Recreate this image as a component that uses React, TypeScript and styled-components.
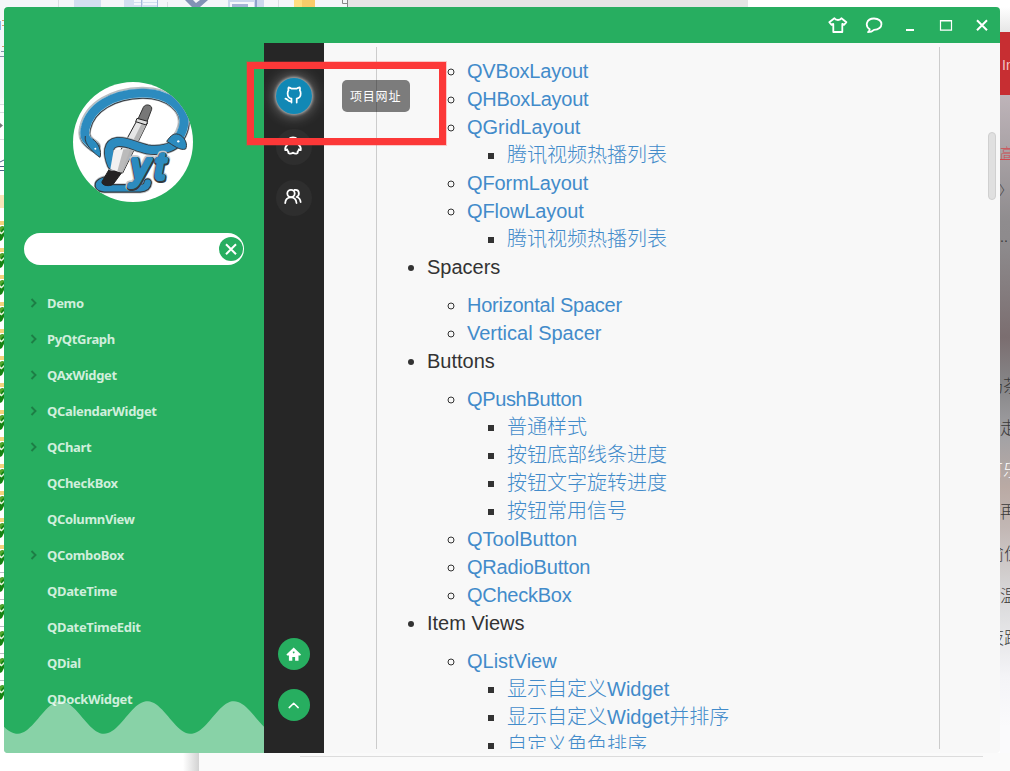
import React from 'react';
import styled, { createGlobalStyle, css } from 'styled-components';

const GREEN = '#27ae60';

const GlobalStyle = createGlobalStyle`
  * { box-sizing: border-box; }
  body { margin: 0; overflow: hidden; }
  button { border: 0; padding: 0; background: none; color: inherit; font: inherit; }
`;

/* ---------- desktop behind the window ---------- */

const Desktop = styled.div`
  position: relative;
  width: 1010px;
  height: 771px;
  overflow: hidden;
  background: #fff;
  font-family: 'Liberation Sans', 'Noto Sans CJK SC', sans-serif;
`;

const Backdrop = styled.div`
  display: grid;
  grid-template: 7px 746px 18px / 4px 996px 10px;
  height: 771px;
`;

const ToolbarStrip = styled.div`
  grid-column: 1 / 4;
  display: flex;
  height: 7px;
  overflow: hidden;
`;

const RibbonPart = styled.div`
  width: 348px;
  height: 7px;
  background: #f4f6f9;
  svg { display: block; }
`;

const GreyPart = styled.div`
  width: 400px;
  background: #e5e5e5;
`;

const FileStrip = styled.div`
  width: 4px;
  overflow: hidden;
  background: #fff;
`;

const FileStripHead = styled.div`
  height: 214px;
  background: linear-gradient(#f4f6f9 90px, #fff 100px);
  svg { display: block; }
`;

const FileRow = styled.div<{ $folder: boolean }>`
  height: 27px;
  border-top: ${p => (p.$folder ? '4px solid #f3d27c' : '1px solid #b9bcc2')};
  padding-top: ${p => (p.$folder ? 0 : 3)}px;
  svg { display: block; }
`;

const PageStrip = styled.div`
  grid-column: 3;
  grid-row: 2;
  width: 10px;
  overflow: hidden;
  background: linear-gradient(
    #fff 0, #e6e6e6 25px, #c72e32 25px, #c72e32 88px,
    #beb4b9 88px, #8f8c8e 215px, #8d8a8c 240px, #7b6e70 330px, #858486 375px, #a3a2a5 430px,
    #baaaa4 480px, #c2b7b4 520px, #d9d9da 590px, #f4f4f7 670px, #fafafc 720px
  );
`;

const PageLine = styled.div<{ $h: number; $x?: number; $color?: string; $size?: number }>`
  height: ${p => p.$h}px;
  line-height: ${p => p.$h}px;
  margin-left: ${p => p.$x ?? 0}px;
  color: ${p => p.$color ?? '#3a3a3a'};
  font-size: ${p => p.$size ?? 17}px;
  font-weight: 300;
  white-space: nowrap;
`;

const PageFoot = styled.div`
  grid-column: 1 / 4;
  display: grid;
  grid-template-columns: 183px 16px 101px 683px 1fr;
  background: #fafafa;
`;
const White = styled.div`background: #fff;`;
const Shade = styled.div`background: linear-gradient(90deg, #fff, #d2d2d2);`;
const Rule = styled.div`
  grid-column: 4;
  height: 4px;
  border-bottom: 1px solid #dcdcdc;
`;

/* ---------- application window ---------- */

const Window = styled.main`
  position: absolute;
  left: 4px;
  top: 7px;
  width: 996px;
  height: 746px;
  display: grid;
  grid-template: 36px 710px / 260px 60px 676px;
  overflow: hidden;
  border-radius: 4px;
  background: #f8f8f8;
`;

const TitleBar = styled.header`
  grid-column: 2 / 4;
  display: flex;
  justify-content: flex-end;
  background: ${GREEN};
`;

const TitleButton = styled.button`
  width: 36px;
  height: 36px;
  display: flex;
  align-items: center;
  justify-content: center;
`;

const Sidebar = styled.aside`
  grid-column: 1;
  grid-row: 1 / 3;
  position: relative;
  padding-top: 75px;
  overflow: hidden;
  background: ${GREEN};
`;

const Avatar = styled.div`
  width: 120px;
  height: 120px;
  margin: 0 auto 0 69px;
  border-radius: 50%;
  overflow: hidden;
  background: #fff;
  svg { display: block; }
`;

const SearchBox = styled.div`
  display: flex;
  align-items: center;
  justify-content: flex-end;
  width: 220px;
  height: 32px;
  margin: 31px 20px 20px;
  padding-right: 1px;
  border-radius: 16px;
  background: #fff;
`;

const ClearButton = styled.button`
  display: flex;
  width: 24px;
  height: 24px;
  align-items: center;
  justify-content: center;
  border-radius: 50%;
  background: ${GREEN};
`;

const Menu = styled.nav`
  display: flex;
  flex-direction: column;
`;

const MenuItem = styled.a`
  display: flex;
  align-items: center;
  height: 36px;
  padding-left: 26px;
  color: #d0eedc;
  font: 700 13px/36px 'Noto Sans', 'Open Sans', sans-serif;
  letter-spacing: -0.33px;
`;

const Arrow = styled.span`
  display: flex;
  width: 17px;
`;

const Wave = styled.svg`
  position: absolute;
  left: 0;
  bottom: 0;
`;

const Rail = styled.div`
  display: flex;
  flex-direction: column;
  align-items: center;
  gap: 15px;
  padding: 35px 0 32px;
  background: #262626;
`;

const RailButton = styled.button<{ $active?: boolean }>`
  display: flex;
  align-items: center;
  justify-content: center;
  width: 36px;
  height: 36px;
  padding: 0 2px 2px 0;
  border-radius: 50%;
  background: #2e2e2e;
  ${p => p.$active && css`
    background: #1188b5;
    box-shadow: 0 0 3px 1px rgba(255, 255, 255, 0.55), 0 0 14px 2px rgba(255, 255, 255, 0.38);
  `}
`;

const RoundButton = styled.button`
  display: flex;
  align-items: center;
  justify-content: center;
  width: 32px;
  height: 32px;
  margin-bottom: 4px;
  border-radius: 50%;
  background: ${GREEN};
  &:last-child { margin-bottom: 0; }
`;

const RailSpacer = styled.div`flex: 1;`;

const Content = styled.section`
  display: flex;
  justify-content: space-between;
  padding: 4px 4px 4px 52px;
`;

const Article = styled.article`
  width: 564px;
  height: 702px;
  padding: 10px 30px;
  overflow: hidden;
  border: solid #ccc;
  border-width: 0 1px;
  color: #333;
  font-size: 20px;
  line-height: 28px;
`;

const List = styled.ul<{ $level: number }>`
  margin: ${p => (p.$level === 2 ? '10px 0 0' : 0)};
  padding-left: ${p => (p.$level === 1 ? 20 : 40)}px;
  list-style: ${p => ['', 'disc', 'circle', 'square'][p.$level]};
`;

const FirstList = styled(List)`margin-top: 0;`;

const Continued = styled.div`padding-left: 20px;`;

const Link = styled.a<{ $tracking?: number }>`
  color: #428bca;
  font-weight: 300;
  letter-spacing: ${p => p.$tracking ?? 0}px;
`;

const ScrollThumb = styled.div`
  width: 8px;
  height: 68px;
  margin-top: 85px;
  border: 1px solid #d0d0d0;
  border-radius: 4px;
  background: #e0e0e0;
`;

const Tooltip = styled.div`
  position: absolute;
  left: 342px;
  top: 80px;
  width: 68px;
  height: 32px;
  padding-left: 8px;
  border-radius: 5px;
  background: rgba(0, 0, 0, 0.5);
  color: #fff;
  font: 400 12px/32px 'Noto Sans CJK SC', sans-serif;
  letter-spacing: 0.8px;
  white-space: nowrap;
`;

const Marker = styled.div`
  position: absolute;
  left: 247px;
  top: 62px;
  width: 199px;
  height: 83px;
  border: 7px solid #fc3838;
  outline: 1px solid rgba(252, 56, 56, 0.25);
`;

/* ---------- drawings ---------- */

const stroke = { fill: 'none', stroke: '#fff', strokeLinecap: 'round' as const, strokeLinejoin: 'round' as const };

const Logo = () => {
  const body = 'M104 230 C84 214 68 206 76 174 C90 110 160 71 246 69 C325 68 384 114 370 172 C366 188 362 196 352 208';
  const neck = 'M350 218 C334 234 300 244 262 238 C225 231 205 213 172 216 C142 220 142 250 156 285';
  const base = 'M150 330 C124 332 113 340 118 350 C124 357 140 355 158 355 L240 355 C256 354 262 348 263 338';
  const lines = [neck, base];
  return (
    <svg width="120" height="120" viewBox="39 36 360 360">
      <g fill="none" strokeLinecap="round" strokeLinejoin="round">
        <path d={body} stroke="#b9bec2" strokeWidth="38" />
        <path d={body} stroke="#343a3f" strokeWidth="31" transform="translate(1 2)" />
        <path d={body} stroke="#a9cfe2" strokeWidth="29" />
        <path d={body} stroke="#2c8bbf" strokeWidth="26" />
        <path d={base} stroke="#c4c8cb" strokeWidth="31" />
        <path d={base} stroke="#343a3f" strokeWidth="26" />
        <path d={base} stroke="#2c8bbf" strokeWidth="19" />
      </g>
      <path d="M231 151 L262 159 L188 309 L151 298Z" fill="#e6e6e6" stroke="#222" strokeWidth="3" />
      <path d="M247 157 L261 160 L187 309 L173 304Z" fill="#b4b4b4" />
      <path d="M148 297 L185 308 L160 342 C150 351 123 347 126 335Z" fill="#252324" stroke="#222" strokeWidth="3" />
      <path d="M234 147 L250 112 C257 99 278 105 275 118 L261 155 Z" fill="#777" stroke="#333" strokeWidth="3" />
      <path d="M231 145 L263 154 L259 165 L227 155Z" fill="#ddd" stroke="#222" strokeWidth="3" />
      <g fill="none" strokeLinecap="round">
        <path d={lines[0]} stroke="#b9bec2" strokeWidth="34" />
        <path d={lines[0]} stroke="#343a3f" strokeWidth="30" />
        <path d={lines[0]} stroke="#2c8bbf" strokeWidth="25" />
      </g>
      <path d="M161 240 L207 236 L178 306 L151 298Z" fill="#f1f1f1" />
      <path d="M190 238 L211 237 L184 308 L172 304Z" fill="#bbb" />
      <path d="M76 198 C70 222 104 252 120 262 C126 244 116 219 98 207" fill="#2c8bbf" stroke="#343a3f" strokeWidth="3" />
      <path d="M320 214 C334 194 344 186 362 196 C378 207 383 225 377 237 C360 243 340 226 320 214Z" fill="#2c8bbf" stroke="#343a3f" strokeWidth="3" />
      <circle cx="106" cy="236" r="3" fill="#fff" />
      <circle cx="355" cy="214" r="3.5" fill="#fff" />
      <g fontFamily="Liberation Sans, sans-serif" fontSize="108" fontWeight="400" fontStyle="italic" strokeLinejoin="round" strokeLinecap="round" letterSpacing="17">
        <text x="214" y="328" stroke="#c4c8cb" strokeWidth="23" fill="#bfc4c8">yt</text>
        <text x="215" y="330" stroke="#343a3f" strokeWidth="18" fill="#343a3f">yt</text>
        <text x="214" y="328" stroke="#2c8bbf" strokeWidth="12" fill="#2c8bbf">yt</text>
      </g>
    </svg>
  );
};

const ShirtIcon = () => (
  <svg width="20" height="18" viewBox="0 0 20 18" {...stroke} strokeWidth="1.8">
    <path d="M6.4 2.2 L1.3 6.2 L3.6 8.9 L5.3 7.9 V16 H14.3 V7.9 L16 8.9 L18.4 6.2 L13.4 2.2 C12.4 4.6 7.6 4.6 6.4 2.2Z" />
  </svg>
);
const BubbleIcon = () => (
  <svg width="18" height="18" viewBox="0 0 18 18" {...stroke} strokeWidth="1.8">
    <path d="M4.7 13.3 C-.2 10 1.1 2.5 9 2.5 C19 2.5 18.8 13.8 9 13.8 C7.2 15.6 5.2 16.1 3 16.1 C4 15.3 4.6 14.3 4.7 13.3Z" />
  </svg>
);
const CloseIcon = ({ size = 12 }: { size?: number }) => (
  <svg width={size} height={size} viewBox="0 0 12 12" fill="none" stroke="#fff" strokeWidth="2">
    <path d="M1 1.2 L11 11.2 M11 1.2 L1 11.2" />
  </svg>
);
const CatIcon = () => (
  <svg width="18" height="18" viewBox="0 0 18 18" {...stroke} strokeWidth="1.7">
    <path d="M7.5 16.6 V12.6 C4.7 12.1 3.6 10.3 3.6 7.4 C3.6 6 3.9 5.1 4.5 4.4 C4.2 3.2 4.2 2.2 4.6 1.3 C5.9 1.5 6.8 2 7.5 2.6 H12.7 C13.4 2 14.4 1.5 15.8 1.3 C16.2 2.3 16.2 3.2 15.8 4.4 C16.4 5.1 16.7 6 16.7 7.4 C16.7 10.3 15.5 12.1 12.7 12.6 V16.6 M7.5 15.4 C4 16.1 4.2 13 1.4 12.6" />
  </svg>
);
const PenguinIcon = () => (
  <svg width="20" height="20" viewBox="0 0 20 20" {...stroke} strokeWidth="1.8">
    <path d="M5 8 C4.5 4 6 1.4 10 1.4 C14 1.4 15.5 4 15 8 C16.8 9.7 18.3 12 17.7 14.2 C16.9 14.2 16.4 13.7 15.9 13.3 C15.7 14.5 15.1 15.2 14.5 15.9 C15.8 17.8 11.9 18.1 10 16.7 C8.1 18.1 4.2 17.8 5.5 15.9 C4.9 15.2 4.3 14.5 4.1 13.3 C3.6 13.7 3.1 14.2 2.3 14.2 C1.7 12 3.2 9.7 5 8Z" />
  </svg>
);
const PeopleIcon = () => (
  <svg width="20" height="18" viewBox="0 0 20 18" {...stroke} strokeWidth="1.8">
    <circle cx="8" cy="5.5" r="3.7" />
    <path d="M2.2 15 C2.4 11.5 4.5 9.3 8 9.3 C11.5 9.3 13.2 11.5 13.5 15 M11.5 2 C16.5 1 17.2 7.2 13.6 9 C16.2 9.7 17.4 11.6 17.6 14" />
  </svg>
);
const HomeIcon = () => (
  <svg width="18" height="16" viewBox="0 0 18 16" fill="#fff">
    <path fillRule="evenodd" d="M8.7 1.4 L16 8.6 L15.2 9.6 H13.5 V14.8 H10.1 V11 H7.3 V14.8 H3.9 V9.6 H2.2 L1.4 8.6Z M8.7 5.4 A.9 .9 0 1 0 8.71 5.4Z" />
  </svg>
);
const UpIcon = () => (
  <svg width="12" height="8" viewBox="0 0 12 8" {...stroke} strokeWidth="1.5"><path d="M1.2 6.6 L5.7 2.2 L10.2 6.6" /></svg>
);
const ChevronIcon = () => (
  <svg width="8" height="10" viewBox="0 0 8 10" fill="none" stroke="#1d7e46" strokeWidth="1.9"><path d="M1.5 1 L5.5 5 L1.5 9" /></svg>
);

const RibbonIcons = () => (
  <svg width="348" height="7" viewBox="0 0 348 7">
    <path d="M58.5 0 V7 M167.5 2 V7 M278.5 0 V7" stroke="#dadde2" />
    <path d="M74 0 H101 V7 H74Z" fill="#d3dff0" />
    <path d="M124 0 H158 V7 H124Z" fill="#d3dff0" />
    <path d="M134 1 H141 M134 4 H141 M143 1 H157 M143 4 H157" stroke="#fff" strokeWidth="1.5" />
    <path d="M141.5 0 V7 M157.5 0 V7" stroke="#a8badb" />
    <path d="M185 0 H193 L196 3 L200 0 H208 L200 7 H192Z" fill="#8292b5" />
    <path d="M228 0 H264 V7 H228Z" fill="#cbd7ec" />
    <path d="M230 2 H254 V7 H230Z" fill="#f5f7fb" /><path d="M232 4 H248 V7 H232Z" fill="#a5b4d5" />
    <path d="M256 0 V7" stroke="#8ea2cb" strokeWidth="2" />
    <path d="M294 0 H315 V7 H294Z" fill="#ffdf82" /><path d="M302 0 H315 V7 H302Z" fill="#f8cc69" />
    <path d="M342.5 0 V3.5 H347 M347.5 0 V7" stroke="#888" fill="none" />
  </svg>
);

const StripMarks = () => (
  <svg width="4" height="214" viewBox="0 0 4 214" fill="none">
    <path d="M0 15.5 H1 M0 19 H1 M1 44.5 H4 M0 49.5 H4" stroke="#8494aa" />
    <path d="M2 13.5 H4 M2 18.5 H4 M2 39.5 H4" stroke="#d89870" />
    <path d="M.5 14 V23" stroke="#8abce8" />
    <path d="M0 97.5 H4 M0 105.5 H4 M0 132.5 H4" stroke="#d9dce0" />
    <path d="M0 116 L3 118.5 L0 121Z" fill="#777" />
    <path d="M0 155 L4 153 M0 159.5 H4 M0 163.5 H4" stroke="#4d6388" />
    <path d="M0 188 H4 V201 H0Z" fill="#f8e4b8" />
  </svg>
);

const Check = () => (
  <svg width="4" height="20" viewBox="0 0 4 20">
    <path d="M0 2 L3 1 L4 2 V11 L2 15 L0 16Z" fill="#168312" />
    <path d="M0 2 L3 1 L4 3 L2 4 L1 6 L0 6Z" fill="#55a72d" /><path d="M0 6 L1.5 7.5 L4 5 V7 L1.5 9.5 L0 8.5Z" fill="#e7f3df" />
  </svg>
);

/* ---------- data ---------- */

const menu: [string, boolean][] = [
  ['Demo', true], ['PyQtGraph', true], ['QAxWidget', true], ['QCalendarWidget', true], ['QChart', true],
  ['QCheckBox', false], ['QColumnView', false], ['QComboBox', true], ['QDateTime', false],
  ['QDateTimeEdit', false], ['QDial', false], ['QDockWidget', false],
];

type Entry = { name: string; tracking?: number; items?: string[] };

const layouts: Entry[] = [
  { name: 'QVBoxLayout', tracking: -0.2 }, { name: 'QHBoxLayout', tracking: -0.3 },
  { name: 'QGridLayout', items: ['腾讯视频热播列表'] },
  { name: 'QFormLayout', tracking: -0.1 },
  { name: 'QFlowLayout', tracking: -0.1, items: ['腾讯视频热播列表'] },
];

const sections: { title: string; entries: Entry[] }[] = [
  { title: 'Spacers', entries: [{ name: 'Horizontal Spacer', tracking: -0.24 }, { name: 'Vertical Spacer' }] },
  {
    title: 'Buttons',
    entries: [
      { name: 'QPushButton', tracking: -0.35, items: ['普通样式', '按钮底部线条进度', '按钮文字旋转进度', '按钮常用信号'] },
      { name: 'QToolButton' }, { name: 'QRadioButton', tracking: -0.2 }, { name: 'QCheckBox', tracking: -0.25 },
    ],
  },
  {
    title: 'Item Views',
    entries: [{ name: 'QListView', items: ['显示自定义Widget', '显示自定义Widget并排序', '自定义角色排序'] }],
  },
];

const entryNodes = (entries: Entry[]) =>
  entries.map(e => (
    <li key={e.name}>
      <Link $tracking={e.tracking}>{e.name}</Link>
      {e.items && (
        <List $level={3}>
          {e.items.map(i => <li key={i}><Link>{i}</Link></li>)}
        </List>
      )}
    </li>
  ));

const wavePoints = Array.from({ length: 131 }, (_, i) => {
  const x = i * 2;
  return `${x},${(16.5 - 16.3 * -Math.cos(((x - 13.3) / 86.67) * 2 * Math.PI)).toFixed(2)}`;
}).join(' ');

export default function App() {
  return (
    <Desktop>
      <GlobalStyle />
      <Backdrop>
        <ToolbarStrip>
          <RibbonPart><RibbonIcons /></RibbonPart>
          <GreyPart />
        </ToolbarStrip>
        <FileStrip>
          <FileStripHead><StripMarks /></FileStripHead>
          {Array.from({ length: 18 }, (_, i) => <FileRow key={i} $folder={i < 13}><Check /></FileRow>)}
        </FileStrip>
        <PageStrip>
          <PageLine $h={25} />
          <PageLine $h={67} $x={2} $color="#f0c4c4" $size={14}>In</PageLine>
          <PageLine $h={40} />
          <PageLine $h={28} $color="#cf4a50" $size={14}><u>高</u></PageLine>
          <PageLine $h={48} $x={-1} $size={13}>〉</PageLine>
          <PageLine $h={44} $size={14}>..</PageLine>
          <PageLine $h={107} />
          <PageLine $h={42} $x={-14}>奶茶</PageLine>
          <PageLine $h={42}>走</PageLine>
          <PageLine $h={42} $x={-14} $color="#fff">可乐</PageLine>
          <PageLine $h={42}>再</PageLine>
          <PageLine $h={42} $x={-13}>偷优</PageLine>
          <PageLine $h={42}>温</PageLine>
          <PageLine $h={42} $x={-13}>夜跑</PageLine>
        </PageStrip>
        <PageFoot><White /><Shade /><Rule /></PageFoot>
      </Backdrop>

      <Window>
        <Sidebar>
          <Avatar><Logo /></Avatar>
          <SearchBox><ClearButton><CloseIcon /></ClearButton></SearchBox>
          <Menu>
            {menu.map(([name, expandable]) => (
              <MenuItem key={name}><Arrow>{expandable && <ChevronIcon />}</Arrow>{name}</MenuItem>
            ))}
          </Menu>
          <Wave width="260" height="52" viewBox="0 0 260 52">
            <polygon points={`0,52 ${wavePoints} 260,52`} fill="#fff" fillOpacity="0.45" />
          </Wave>
        </Sidebar>
        <TitleBar>
          <TitleButton><ShirtIcon /></TitleButton>
          <TitleButton><BubbleIcon /></TitleButton>
          <TitleButton>
            <svg width="12" height="12" viewBox="0 0 12 12"><path d="M2 11 H10" stroke="#fff" strokeWidth="2" /></svg>
          </TitleButton>
          <TitleButton>
            <svg width="14" height="12" viewBox="0 0 14 12"><path d="M1.5 1.5 H12.5 V11.2 H1.5Z M1 2 H13" fill="none" stroke="#fff" strokeWidth="1.2" /></svg>
          </TitleButton>
          <TitleButton><CloseIcon /></TitleButton>
        </TitleBar>
        <Rail>
          <RailButton $active><CatIcon /></RailButton>
          <RailButton><PenguinIcon /></RailButton>
          <RailButton><PeopleIcon /></RailButton>
          <RailSpacer />
          <RoundButton><HomeIcon /></RoundButton>
          <RoundButton><UpIcon /></RoundButton>
        </Rail>
        <Content>
          <Article>
            <Continued>
              <FirstList $level={2}>{entryNodes(layouts)}</FirstList>
            </Continued>
            <List $level={1}>
              {sections.map(s => (
                <li key={s.title}>
                  {s.title}
                  <List $level={2}>{entryNodes(s.entries)}</List>
                </li>
              ))}
            </List>
          </Article>
          <ScrollThumb />
        </Content>
      </Window>
      <Tooltip>项目网址</Tooltip>
      <Marker />
    </Desktop>
  );
}
